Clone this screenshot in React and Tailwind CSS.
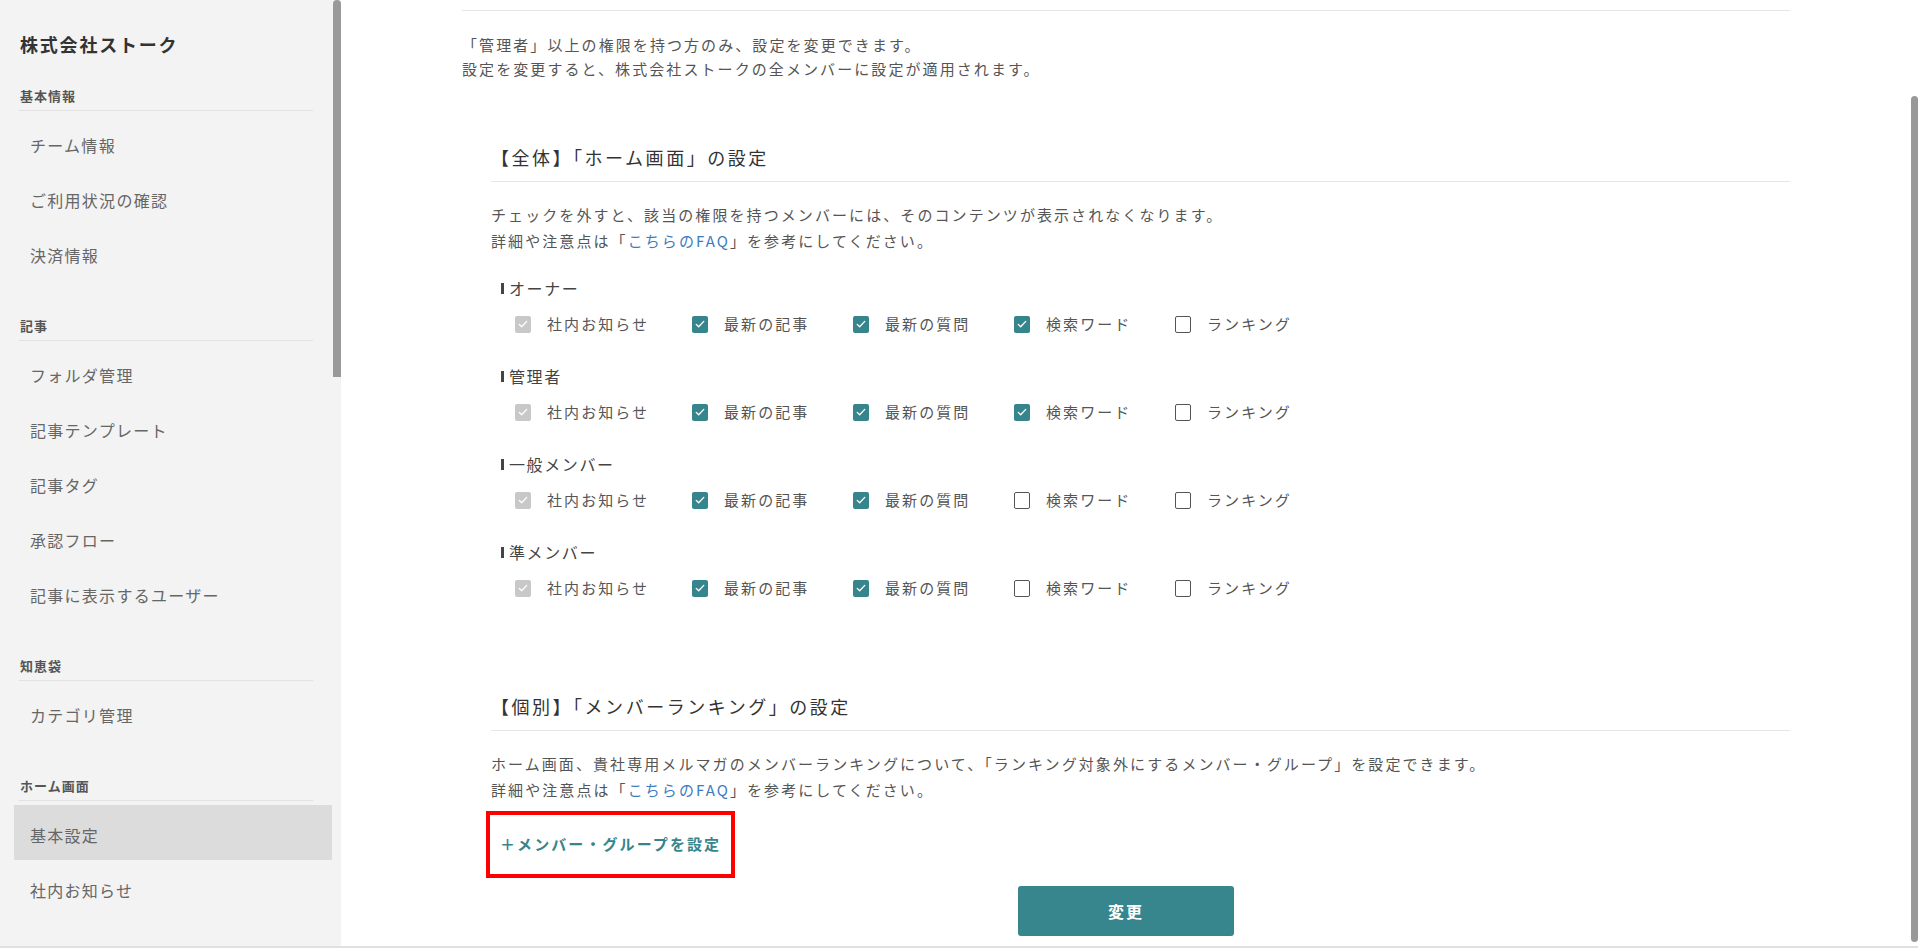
import React from 'react';

const FONT = { fontFamily: '"Noto Sans CJK JP", "Noto Sans", sans-serif' };

const NAV = [
  { label: '基本情報', items: ['チーム情報', 'ご利用状況の確認', '決済情報'] },
  { label: '記事', items: ['フォルダ管理', '記事テンプレート', '記事タグ', '承認フロー', '記事に表示するユーザー'] },
  { label: '知恵袋', items: ['カテゴリ管理'] },
  { label: 'ホーム画面', items: ['基本設定', '社内お知らせ'] },
];

const COLUMNS = ['社内お知らせ', '最新の記事', '最新の質問', '検索ワード', 'ランキング'];

// 'd' = disabled (checked, grey), 'c' = checked, 'u' = unchecked
const ROLES = [
  { name: 'オーナー', states: ['d', 'c', 'c', 'c', 'u'] },
  { name: '管理者', states: ['d', 'c', 'c', 'c', 'u'] },
  { name: '一般メンバー', states: ['d', 'c', 'c', 'u', 'u'] },
  { name: '準メンバー', states: ['d', 'c', 'c', 'u', 'u'] },
];

const Check = () => (
  <svg viewBox="0 0 16 16" className="w-[12px] h-[12px]" fill="none">
    <path d="M3 8.5l3.2 3.2L13 4.5" stroke="white" strokeWidth="1.8" strokeLinecap="round" strokeLinejoin="round" />
  </svg>
);

const Box = ({ state }) => {
  if (state === 'u') {
    return <span className="w-[16px] h-[17px] rounded-[2px] border-[1.5px] border-[#555] bg-white shrink-0" />;
  }
  return (
    <span
      className={`w-[16px] h-[17px] rounded-[2px] flex items-center justify-center shrink-0 ${
        state === 'd' ? 'bg-[#c8c8c8]' : 'bg-[#37858c]'
      }`}
    >
      <Check />
    </span>
  );
};

const Sidebar = () => (
  <div className="flex h-full shrink-0">
    <div className="w-[333px] h-full bg-[#f3f3f3] pt-[31px] text-[#666]">
      <div className="pl-[20px] text-[18px] leading-[26px] font-bold tracking-[0.1em] text-[#333]">
        株式会社ストーク
      </div>
      {NAV.map((sec) => (
        <div key={sec.label} className="mt-[30px] [&+div]:mt-[37px]">
          <div className="ml-[19px] w-[294px] border-b border-[#e2e2e2] pb-[5px] pl-[1px] text-[13px] leading-[18px] font-bold tracking-[0.08em] text-[#555]">
            {sec.label}
          </div>
          <div className="mt-[4px]">
            {sec.items.map((item) => (
              <div
                key={item}
                className={`ml-[14px] w-[318px] h-[55px] pt-[4px] pl-[16px] flex items-center text-[16px] tracking-[0.08em] ${
                  item === '基本設定' ? 'bg-[#dcdcdc]' : ''
                }`}
              >
                {item}
              </div>
            ))}
          </div>
        </div>
      ))}
    </div>
    <div className="w-[8px] h-full bg-[#f3f3f3]">
      <div className="w-[8px] h-[377px] bg-[#999] rounded-t-[4px]" />
    </div>
  </div>
);

const FaqLine = () => (
  <p>
    詳細や注意点は「<span className="text-[#3b7cc0]">こちらのFAQ</span>」を参考にしてください。
  </p>
);

const Main = () => (
  <div className="flex-1 h-full flex bg-white">
    <div className="flex-1 flex justify-center">
      <div className="w-[1328px] pt-[10px] text-[#555] tracking-[0.13em]">
        <div className="border-t border-[#e6e6e6]" />
        <div className="mt-[22px] text-[15px] leading-[24px]">
          <p>「管理者」以上の権限を持つ方のみ、設定を変更できます。</p>
          <p>設定を変更すると、株式会社ストークの全メンバーに設定が適用されます。</p>
        </div>

        <div className="ml-[29px] mt-[62px]">
          <h2 className="pb-[10px] border-b border-[#e6e6e6] text-[18px] leading-[28px] tracking-[0.14em] text-[#333]">
            【全体】「ホーム画面」の設定
          </h2>
          <div className="mt-[20px] text-[15px] leading-[26px]">
            <p>チェックを外すと、該当の権限を持つメンバーには、そのコンテンツが表示されなくなります。</p>
            <FaqLine />
          </div>

          <div className="mt-[22px] flex flex-col gap-[28px]">
            {ROLES.map((role) => (
              <div key={role.name}>
                <div className="ml-[10px] h-[24px] flex items-center gap-[5px] text-[16px] tracking-[0.1em] text-[#444]">
                  <span className="w-[3px] h-[11px] bg-[#444]" />
                  {role.name}
                </div>
                <div className="mt-[12px] ml-[24px] h-[24px] flex items-center text-[15px] text-[#555]">
                  {COLUMNS.map((col, i) => (
                    <div key={col} className={`flex items-center gap-[16px] ${i === 0 ? 'w-[177px]' : 'w-[161px]'}`}>
                      <Box state={role.states[i]} />
                      <span>{col}</span>
                    </div>
                  ))}
                </div>
              </div>
            ))}
          </div>

          <h2 className="mt-[92px] pb-[10px] border-b border-[#e6e6e6] text-[18px] leading-[28px] tracking-[0.14em] text-[#333]">
            【個別】「メンバーランキング」の設定
          </h2>
          <div className="mt-[20px] text-[15px] leading-[26px]">
            <p>ホーム画面、貴社専用メルマガのメンバーランキングについて、「ランキング対象外にするメンバー・グループ」を設定できます。</p>
            <FaqLine />
          </div>
        </div>

        <div className="mt-[8px] ml-[24px] inline-flex h-[67px] items-center border-4 border-[#ff0000] px-[10px]">
          <span className="text-[15px] font-bold text-[#37858c]">＋メンバー・グループを設定</span>
        </div>

        <div className="mt-[8px] flex justify-center">
          <button className="w-[216px] h-[50px] rounded-[3px] bg-[#37858d] text-white text-[16px] font-bold">
            変更
          </button>
        </div>
      </div>
    </div>
    <div className="w-[7px] h-full pt-[96px]">
      <div className="w-[7px] h-[846px] bg-[#999] rounded-[4px]" />
    </div>
  </div>
);

export default function App() {
  return (
    <div style={FONT} className="w-[1918px] h-[948px] overflow-hidden flex flex-col">
      <div className="flex-1 flex min-h-0">
        <Sidebar />
        <Main />
      </div>
      <div className="h-[2px] bg-[#e0e0e0]" />
    </div>
  );
}
